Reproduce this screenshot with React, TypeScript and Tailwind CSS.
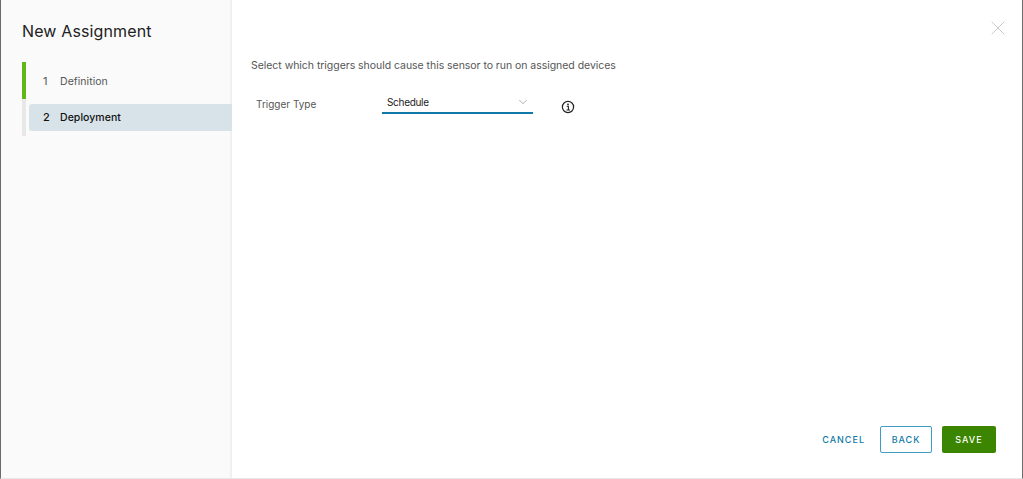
import { ChevronDown, X } from "lucide-react";

function InfoIcon() {
  return (
    <svg width="14" height="14" viewBox="0 0 14 14" fill="none" className="text-[#222]">
      <circle cx="7" cy="7" r="5.6" stroke="currentColor" strokeWidth="1.2" />
      <circle cx="7" cy="4.3" r="0.9" fill="currentColor" />
      <path d="M5.7 6.2H7.4V9.9M5.5 10H9" stroke="currentColor" strokeWidth="1.1" />
    </svg>
  );
}

function Step({ num, label, active }: { num: string; label: string; active?: boolean }) {
  return (
    <div className="flex h-[37px] items-stretch">
      <div className={active ? "w-[4px] bg-[#e8e8e8]" : "w-[4px] bg-[#62b916]"} />
      <div
        className={
          active
            ? "-mr-[2px] ml-[3px] flex h-[27px] flex-1 items-center self-center rounded-l-[3px] bg-[#d8e3e9] font-medium text-[#111]"
            : "ml-[3px] flex flex-1 items-center pt-[2px] text-[#565656]"
        }
      >
        <span className="ml-[14px] w-[17px] text-[11px]">{num}</span>
        <span className="text-[10.5px] tracking-[0.05px]">{label}</span>
      </div>
    </div>
  );
}

export default function App() {
  return (
    <div className="flex h-[479px] w-[1023px] overflow-hidden border-x border-b border-[#e8e8e8] border-x-[#6b6b6b] bg-white font-['Inter',sans-serif]">
      <aside className="w-[231px] shrink-0 border-r-2 border-[#f0f0f0] bg-[#fafafa] pl-[21px]">
        <h1 className="mt-[20px] h-[22px] text-[16px] leading-[22px] tracking-[0.13px] text-[#222]">New Assignment</h1>
        <div className="mt-[20px]">
          <Step num="1" label="Definition" />
          <Step num="2" label="Deployment" active />
        </div>
      </aside>
      <main className="relative flex-1 pl-[19px]">
        <button className="absolute right-[12px] top-[16px] text-[#c4c4c4]">
          <X size={24} strokeWidth={0.9} />
        </button>
        <p className="mt-[59px] text-[10.5px] leading-[14px] tracking-[-0.04px] text-[#565656]">
          Select which triggers should cause this sensor to run on assigned devices
        </p>
        <div className="mt-[17px] flex items-start">
          <label className="ml-[5px] mt-[7px] w-[126px] text-[10px] leading-[14px] text-[#565656]">
            Trigger Type
          </label>
          <div className="flex h-[24px] w-[151px] items-center justify-between border-b-2 border-[#0f7aa8] pl-[5px] pr-[3px] pt-[2px]">
            <span className="text-[10px] tracking-[-0.3px] text-[#222]">Schedule</span>
            <ChevronDown size={14} strokeWidth={1} className="text-[#777]" />
          </div>
          <span className="ml-[28px] mt-[10px]">
            <InfoIcon />
          </span>
        </div>
        <div className="absolute bottom-[25px] right-[26px] flex items-center text-[9px] font-medium tracking-[1px]">
          <button className="mr-[15px] text-[#0f7aa8]">CANCEL</button>
          <button className="mr-[10px] h-[27px] w-[52px] rounded-[2px] border border-[#3f9cc4] text-[#0f7aa8]">BACK</button>
          <button className="h-[27px] w-[54px] rounded-[2px] bg-[#3c8500] text-white">SAVE</button>
        </div>
      </main>
    </div>
  );
}
